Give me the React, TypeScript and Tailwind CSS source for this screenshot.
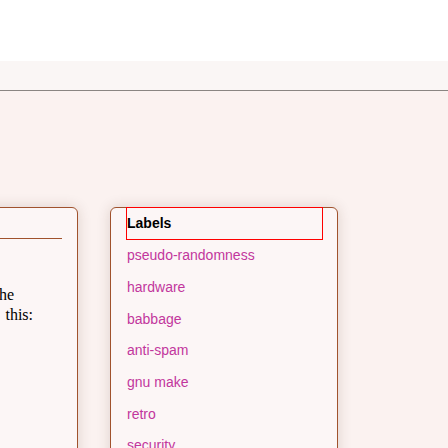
const TAGS = ["pseudo-randomness", "hardware", "babbage", "anti-spam", "gnu make", "retro", "security"];

export default function App() {
  return (
    <div className="h-[448px] w-[448px] overflow-hidden bg-[#fbf2f0] font-['Liberation_Sans',Arial,sans-serif]">
      {/* top bars */}
      <div className="h-[61px] bg-white" />
      <div className="h-[30px] border-b border-[#8a8582] bg-[#faf6f5]" />

      <div className="flex items-start pt-[116px]">
        {/* left panel, mostly off screen */}
        <div className="-ml-[202px] h-[260px] w-[280px] shrink-0 rounded-tr-[6px] border border-[#a0522d] bg-[#fcf6f6] shadow-[0_0_14px_rgba(70,35,20,0.16)]">
          <div className="mr-[15px] mt-[30px] border-t border-[#a0522d]" />
          <div className="mt-[46px] font-['Liberation_Serif',serif] text-[16px] leading-[20px] text-black">
            <div className="whitespace-nowrap pr-[63px] text-right">the</div>
            <div className="whitespace-nowrap pr-[44px] text-right">this:</div>
          </div>
        </div>

        {/* labels panel */}
        <div className="ml-[32px] h-[260px] w-[228px] shrink-0 rounded-t-[6px] border border-[#a0522d] bg-[#fcf6f6] shadow-[0_0_14px_rgba(70,35,20,0.16)]">
          <div className="-mt-px ml-[15px] flex h-[33px] w-[197px] items-center border border-[#ff0000] bg-[#fcf6f6] text-[14px] font-bold text-black">
            Labels
          </div>
          <div className="pl-[16px]">
            {TAGS.map((t) => (
              <div key={t} className="flex h-[31.7px] items-center text-[14px] text-[#c2369d]">
                {t}
              </div>
            ))}
          </div>
        </div>
      </div>
    </div>
  );
}
